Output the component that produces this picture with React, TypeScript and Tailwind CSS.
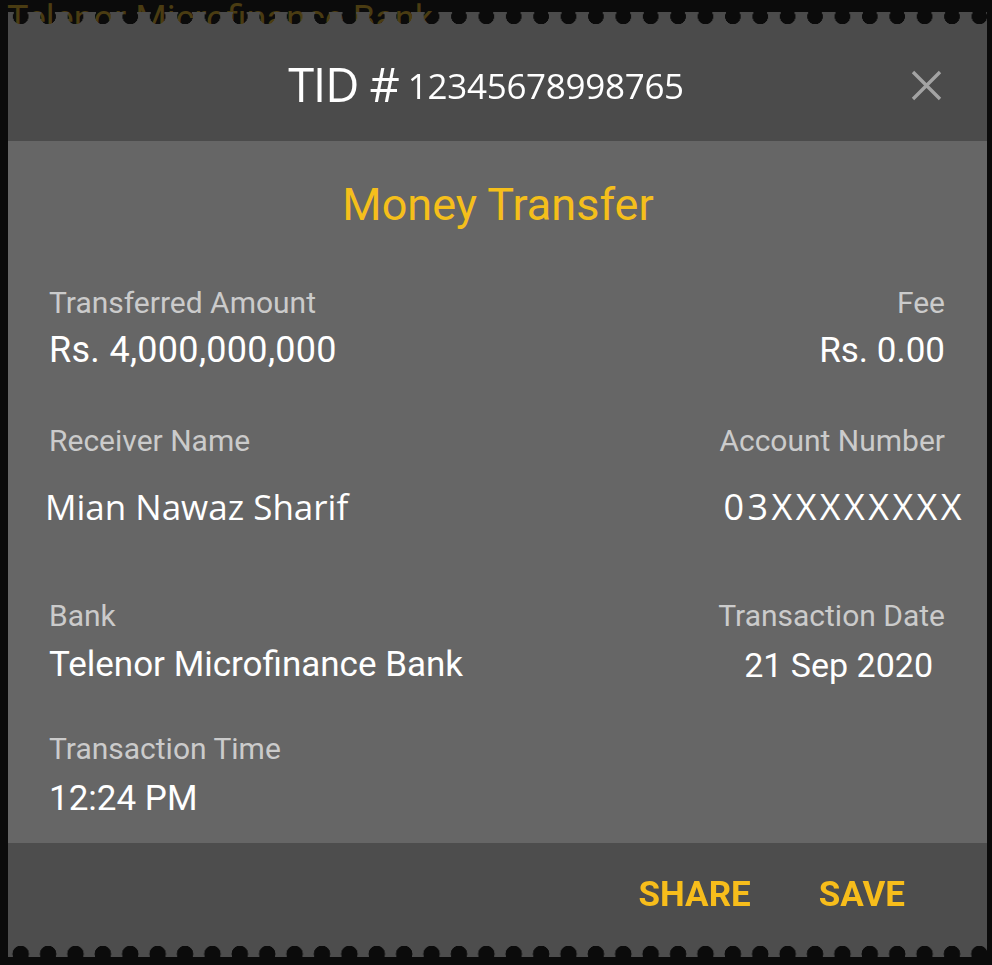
import React from "react"

const roboto = { fontFamily: "Roboto, 'Liberation Sans', sans-serif" }

const Label = ({ children }: { children: React.ReactNode }) => (
  <div className="text-[30px] leading-none text-[#cbcbcb] whitespace-nowrap" style={roboto}>{children}</div>
)

export default function App() {
  return (
    <div className="relative w-[992px] h-[965px] bg-[#0b0b0b] overflow-hidden">
      {/* page behind the dialog, only visible through the perforations */}
      <div className="absolute left-[7px] top-[1px] text-[36px] leading-none text-[#4a3c12] font-[Roboto,sans-serif] whitespace-nowrap">
        Telenor Microfinance Bank
      </div>

      <div className="relative z-10 ml-[8px] pt-[12px] w-[979px] flex flex-col">
        {/* header */}
        <div className="relative h-[129px] bg-[#4b4b4b] flex justify-center items-start pt-[49px] [mask-image:radial-gradient(circle_at_50%_4.5px,transparent_7.5px,black_8px)] [mask-size:27.4px_100%] [mask-repeat:repeat-x] [mask-position:-1px_0]">
          <div className="flex items-start gap-[9px] mr-[23px] text-white font-['Open_Sans',sans-serif]">
            <span className="text-[47px] leading-none tracking-[-1px]">TID #</span>
            <span className="text-[35px] leading-none tracking-[-0.3px] mt-[7px]">12345678998765</span>
          </div>
          <button className="absolute right-[45px] top-[58px] w-[31px] h-[31px]">
            <svg viewBox="0 0 31 31" className="w-[31px] h-[31px]">
              <path d="M2 2 L29 29 M29 2 L2 29" stroke="#a3a3a3" strokeWidth="3.4" fill="none" />
            </svg>
          </button>
        </div>

        {/* body */}
        <div className="h-[702px] bg-[#666666] pl-[41px] pr-[42px] pt-[41px]" style={roboto}>
          <div className="text-center text-[45px] leading-none text-[#f5bf1b] ml-[2px]">Money Transfer</div>

          <div className="mt-[61px] flex justify-between">
            <div>
              <Label>Transferred Amount</Label>
              <div className="mt-[14px] text-[36px] leading-none tracking-[0.3px] text-white">Rs. 4,000,000,000</div>
            </div>
            <div className="text-right">
              <Label>Fee</Label>
              <div className="mt-[15px] text-[35px] leading-none text-white">Rs. 0.00</div>
            </div>
          </div>

          <div className="mt-[58px] flex justify-between">
            <div>
              <Label>Receiver Name</Label>
              <div className="mt-[33px] ml-[-4px] text-[35px] leading-none text-white font-['Open_Sans',sans-serif] whitespace-nowrap">Mian Nawaz Sharif</div>
            </div>
            <div className="text-right">
              <Label>Account Number</Label>
              <div className="mt-[33px] mr-[-20px] text-[36px] leading-none tracking-[3.4px] text-white font-['Open_Sans',sans-serif]">03XXXXXXXX</div>
            </div>
          </div>

          <div className="mt-[76px] flex justify-between">
            <div>
              <Label>Bank</Label>
              <div className="mt-[16px] text-[35px] leading-none text-white whitespace-nowrap">Telenor Microfinance Bank</div>
            </div>
            <div className="text-right">
              <Label>Transaction Date</Label>
              <div className="mt-[17px] mr-[12px] text-[34px] leading-none text-white">21 Sep 2020</div>
            </div>
          </div>

          <div className="mt-[52px]">
            <Label>Transaction Time</Label>
            <div className="mt-[17px] text-[35px] leading-none text-white">12:24 PM</div>
          </div>
        </div>

        {/* footer */}
        <div className="h-[114px] bg-[#4d4d4d] flex justify-end items-start pt-[34px] pr-[82px] gap-[68px] [mask-image:radial-gradient(circle_at_50%_111px,transparent_8px,black_8.5px)] [mask-size:27.4px_100%] [mask-repeat:repeat-x] [mask-position:-1px_0]" style={roboto}>
          <button className="text-[35px] leading-none font-bold text-[#f7bd1b]">SHARE</button>
          <button className="text-[35px] leading-none font-bold text-[#f7bd1b]">SAVE</button>
        </div>
      </div>
    </div>
  )
}
